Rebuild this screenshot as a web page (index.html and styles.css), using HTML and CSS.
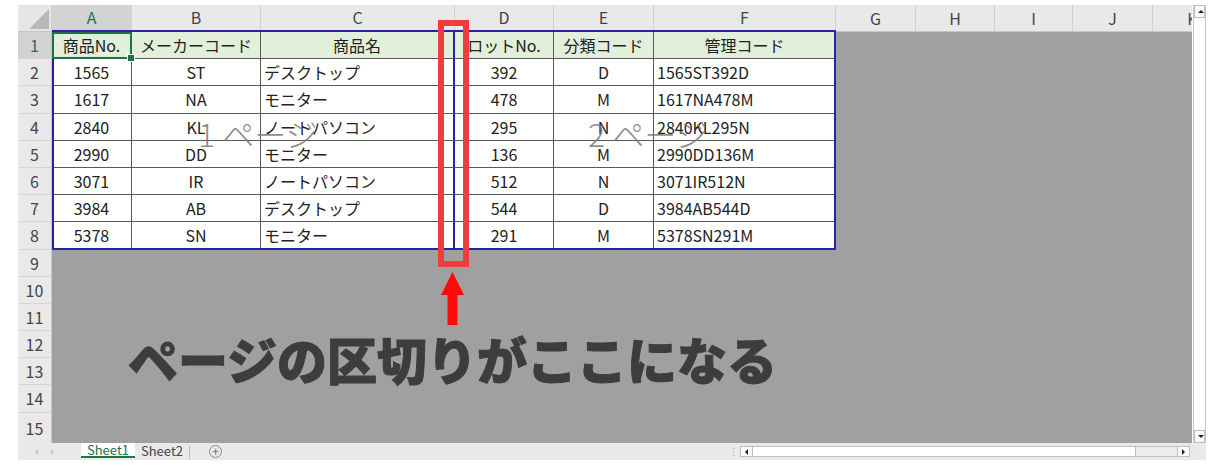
FILE: index.html
```html
<!DOCTYPE html>
<html lang="ja">
<head>
<meta charset="utf-8">
<title>改ページプレビュー</title>
<link rel="stylesheet" href="styles.css">
</head>
<body>
<div class="app">
  <div class="workspace">
    <div class="sheet">
      <div class="corner">
        <svg width="34" height="27" viewBox="0 0 34 27"><polygon points="31,4 31,24 11,24" fill="#b8b8b8"/></svg>
      </div>
      <div class="colheads">
        <div class="ch sel in">A</div>
        <div class="ch in">B</div>
        <div class="ch in">C</div>
        <div class="ch in">D</div>
        <div class="ch in">E</div>
        <div class="ch in">F</div>
        <div class="ch">G</div>
        <div class="ch">H</div>
        <div class="ch">I</div>
        <div class="ch">J</div>
        <div class="ch">K</div>
      </div>
      <div class="rowheads">
        <div class="rh sel">1</div>
        <div class="rh">2</div>
        <div class="rh">3</div>
        <div class="rh">4</div>
        <div class="rh">5</div>
        <div class="rh">6</div>
        <div class="rh">7</div>
        <div class="rh">8</div>
        <div class="rh">9</div>
        <div class="rh">10</div>
        <div class="rh">11</div>
        <div class="rh">12</div>
        <div class="rh">13</div>
        <div class="rh">14</div>
        <div class="rh last">15</div>
      </div>
      <div class="cells">
        <div class="print">
          <div class="c head ctr selected">商品No.</div>
          <div class="c head ctr">メーカーコード</div>
          <div class="c head ctr brk">商品名</div>
          <div class="c head ctr">ロットNo.</div>
          <div class="c head ctr">分類コード</div>
          <div class="c head ctr">管理コード</div>

          <div class="c ctr">1565</div><div class="c ctr">ST</div><div class="c brk">デスクトップ</div><div class="c ctr">392</div><div class="c ctr">D</div><div class="c">1565ST392D</div>
          <div class="c ctr">1617</div><div class="c ctr">NA</div><div class="c brk">モニター</div><div class="c ctr">478</div><div class="c ctr">M</div><div class="c">1617NA478M</div>
          <div class="c ctr">2840</div><div class="c ctr">KL</div><div class="c brk">ノートパソコン</div><div class="c ctr">295</div><div class="c ctr">N</div><div class="c">2840KL295N</div>
          <div class="c ctr">2990</div><div class="c ctr">DD</div><div class="c brk">モニター</div><div class="c ctr">136</div><div class="c ctr">M</div><div class="c">2990DD136M</div>
          <div class="c ctr">3071</div><div class="c ctr">IR</div><div class="c brk">ノートパソコン</div><div class="c ctr">512</div><div class="c ctr">N</div><div class="c">3071IR512N</div>
          <div class="c ctr">3984</div><div class="c ctr">AB</div><div class="c brk">デスクトップ</div><div class="c ctr">544</div><div class="c ctr">D</div><div class="c">3984AB544D</div>
          <div class="c ctr">5378</div><div class="c ctr">SN</div><div class="c brk">モニター</div><div class="c ctr">291</div><div class="c ctr">M</div><div class="c">5378SN291M</div>
        </div>
      </div>
    </div>
    <div class="vscroll">
      <div class="vbtn up"></div>
      <div class="vtrack"></div>
      <div class="vbtn down"></div>
    </div>
  </div>

  <div class="tabbar">
    <div class="tabnav"><span class="nav prev"></span><span class="nav next"></span></div>
    <div class="tab active">Sheet1</div>
    <div class="tab">Sheet2</div>
    <div class="tabsep"></div>
    <div class="addsheet">+</div>
    <div class="tabspace"></div>
    <div class="dots">⋮</div>
    <div class="hscroll">
      <div class="hbtn left"></div>
      <div class="hthumb"></div>
      <div class="htrack"></div>
      <div class="hbtn right"></div>
    </div>
  </div>

  <div class="wm wm1">1 ページ</div>
  <div class="wm wm2">2 ページ</div>
  <div class="redbox"></div>
  <svg class="arrow" width="23" height="53" viewBox="0 0 23 53"><polygon points="0,23 11.5,0 23,23 16.5,23 16.5,53 6.5,53 6.5,23" fill="#ff0a0a"/></svg>
  <div class="caption">ページの区切りがここになる</div>
</div>
</body>
</html>
```

FILE: styles.css
```css
* { box-sizing: border-box; }

html, body {
  margin: 0;
  padding: 0;
  background: #ffffff;
}

body {
  font-family: "Noto Sans CJK JP", "Noto Sans", sans-serif;
  color: #222;
  width: 1230px;
  height: 466px;
  overflow: hidden;
}

.app {
  position: relative;
  width: 1230px;
  height: 466px;
  padding-top: 5px;
  padding-left: 18px;
}

.workspace {
  display: flex;
  gap: 1px;
  height: 438px;
}

.sheet {
  width: 1174px;
  height: 438px;
  overflow: hidden;
  display: grid;
  grid-template-columns: 34px 1140px;
  grid-template-rows: 27px 411px;
}

.corner {
  background: #e6e6e6;
  border-right: 1px solid #cfcfcf;
  border-bottom: 1px solid #c6c6c6;
}
.corner svg { display: block; }

.colheads {
  display: grid;
  grid-template-columns: 80px 129px 194px 99px 100px 182px 80px 79px 78px 80px 80px;
  background: #e9e9e9;
}

.ch {
  font-size: 16px;
  line-height: 26px;
  text-align: center;
  color: #444;
  border-right: 1px solid #d0d0d0;
  border-bottom: 1px solid #c6c6c6;
}
.ch.in { border-bottom: 2px solid #2424a4; line-height: 25px; }
.ch.sel {
  background: #d3d3d3;
  color: #2a6e4b;
}

.rowheads {
  display: flex;
  flex-direction: column;
  background: #e9e9e9;
}

.rh {
  height: 27.2px;
  flex: none;
  font-size: 16px;
  line-height: 26px;
  text-align: center;
  color: #444;
  border-bottom: 1px solid #d4d4d4;
  border-right: 1px solid #c6c6c6;
}
.rh.sel { background: #d3d3d3; color: #2a6e4b; }
.rh.last { flex: 1; height: auto; line-height: 30px; border-bottom: none; }

.cells {
  background: #a0a0a0;
  position: relative;
}

.print {
  position: relative;
  display: grid;
  grid-template-columns: 80px 129px 194px 99px 100px 182px;
  grid-template-rows: repeat(8, 27.2px);
  width: 784px;
  background: #ffffff;
}
.print::after {
  content: "";
  position: absolute;
  left: 0;
  top: -2px;
  right: 0;
  bottom: 0;
  border: 2px solid #2424a4;
  pointer-events: none;
}

.c {
  font-size: 16px;
  line-height: 26px;
  padding: 0 3px;
  white-space: nowrap;
  overflow: hidden;
  color: #222;
  border-right: 1px solid #595959;
  border-bottom: 1px solid #595959;
}
.c.ctr { text-align: center; }
.c.head { background: #e2efda; }
.c.brk { border-right: 2px solid #2424a4; }

.c.selected {
  position: relative;
  overflow: visible;
  outline: 2px solid #1e7145;
  outline-offset: -2px;
  z-index: 1;
}
.c.selected::after {
  content: "";
  position: absolute;
  right: -4px;
  bottom: -4px;
  width: 6px;
  height: 6px;
  background: #1e7145;
  border: 1px solid #ffffff;
}

/* vertical scrollbar */
.vscroll {
  width: 13px;
  height: 438px;
  display: flex;
  flex-direction: column;
  background: #ffffff;
  border-left: 1px solid #c8c8c8;
  border-right: 1px solid #c8c8c8;
}
.vbtn {
  height: 13px;
  flex: none;
  border: 1px solid #bdbdbd;
  background: #fafafa;
  position: relative;
}
.vbtn::before {
  content: "";
  position: absolute;
  left: 3px;
  top: 4px;
  border-left: 3px solid transparent;
  border-right: 3px solid transparent;
}
.vbtn.up::before { border-bottom: 3px solid #222; }
.vbtn.down::before { border-top: 3px solid #222; }
.vtrack { flex: 1; }

/* tab bar */
.tabbar {
  display: flex;
  align-items: stretch;
  width: 1188px;
  height: 17px;
  background: #e9e9e9;
  font-size: 13px;
}
.tabnav {
  width: 63px;
  display: flex;
  align-items: center;
  gap: 13px;
  padding-left: 17px;
}
.nav {
  width: 0;
  height: 0;
  border-top: 3px solid transparent;
  border-bottom: 3px solid transparent;
}
.nav.prev { border-right: 3px solid #c4c4c4; }
.nav.next { border-left: 3px solid #c4c4c4; }

.tab {
  width: 54px;
  text-align: center;
  line-height: 15px;
  color: #444;
}
.tab.active {
  background: #ffffff;
  color: #217346;
  border-bottom: 2px solid #217346;
  margin-top: -1px;
  height: 16px;
}
.tabsep {
  width: 1px;
  margin: 3px 0 1px;
  background: #b8b8b8;
}
.addsheet {
  width: 13px;
  height: 13px;
  margin: 2px 0 0 19px;
  border: 1px solid #8a8a8a;
  border-radius: 50%;
  font-size: 12px;
  line-height: 10px;
  text-align: center;
  color: #6a6a6a;
}
.tabspace { flex: 1; }
.dots {
  width: 14px;
  color: #b0b0b0;
  font-size: 11px;
  line-height: 17px;
  text-align: center;
}
.hscroll {
  width: 450px;
  height: 11px;
  margin: 3px 16px 0 0;
  display: flex;
  border: 1px solid #bdbdbd;
  background: #eeeeee;
}
.hbtn {
  width: 12px;
  flex: none;
  background: #fafafa;
  position: relative;
}
.hbtn.left { border-right: 1px solid #bdbdbd; }
.hbtn.right { border-left: 1px solid #bdbdbd; }
.hbtn::before {
  content: "";
  position: absolute;
  top: 2px;
  left: 4px;
  border-top: 3px solid transparent;
  border-bottom: 3px solid transparent;
}
.hbtn.left::before { border-right: 3px solid #222; }
.hbtn.right::before { border-left: 3px solid #222; }
.hthumb {
  width: 383px;
  background: #ffffff;
  border-right: 1px solid #bdbdbd;
}
.htrack { flex: 1; }

/* annotations over the sheet */
.wm {
  position: absolute;
  top: 117px;
  font-size: 32px;
  line-height: 32px;
  font-weight: 300;
  color: rgba(120, 120, 120, 0.85);
  white-space: nowrap;
  pointer-events: none;
}
.wm1 { left: 198px; }
.wm2 { left: 588px; }

.redbox {
  position: absolute;
  left: 438px;
  top: 20px;
  width: 31px;
  height: 247px;
  border: 6.5px solid #f03c3c;
}

.arrow {
  position: absolute;
  left: 441px;
  top: 272px;
  display: block;
}

.caption {
  position: absolute;
  left: 128px;
  top: 333px;
  font-size: 50px;
  line-height: 50px;
  font-weight: 900;
  color: #3d3d3d;
  -webkit-text-stroke: 1px #3d3d3d;
  white-space: nowrap;
}
```
